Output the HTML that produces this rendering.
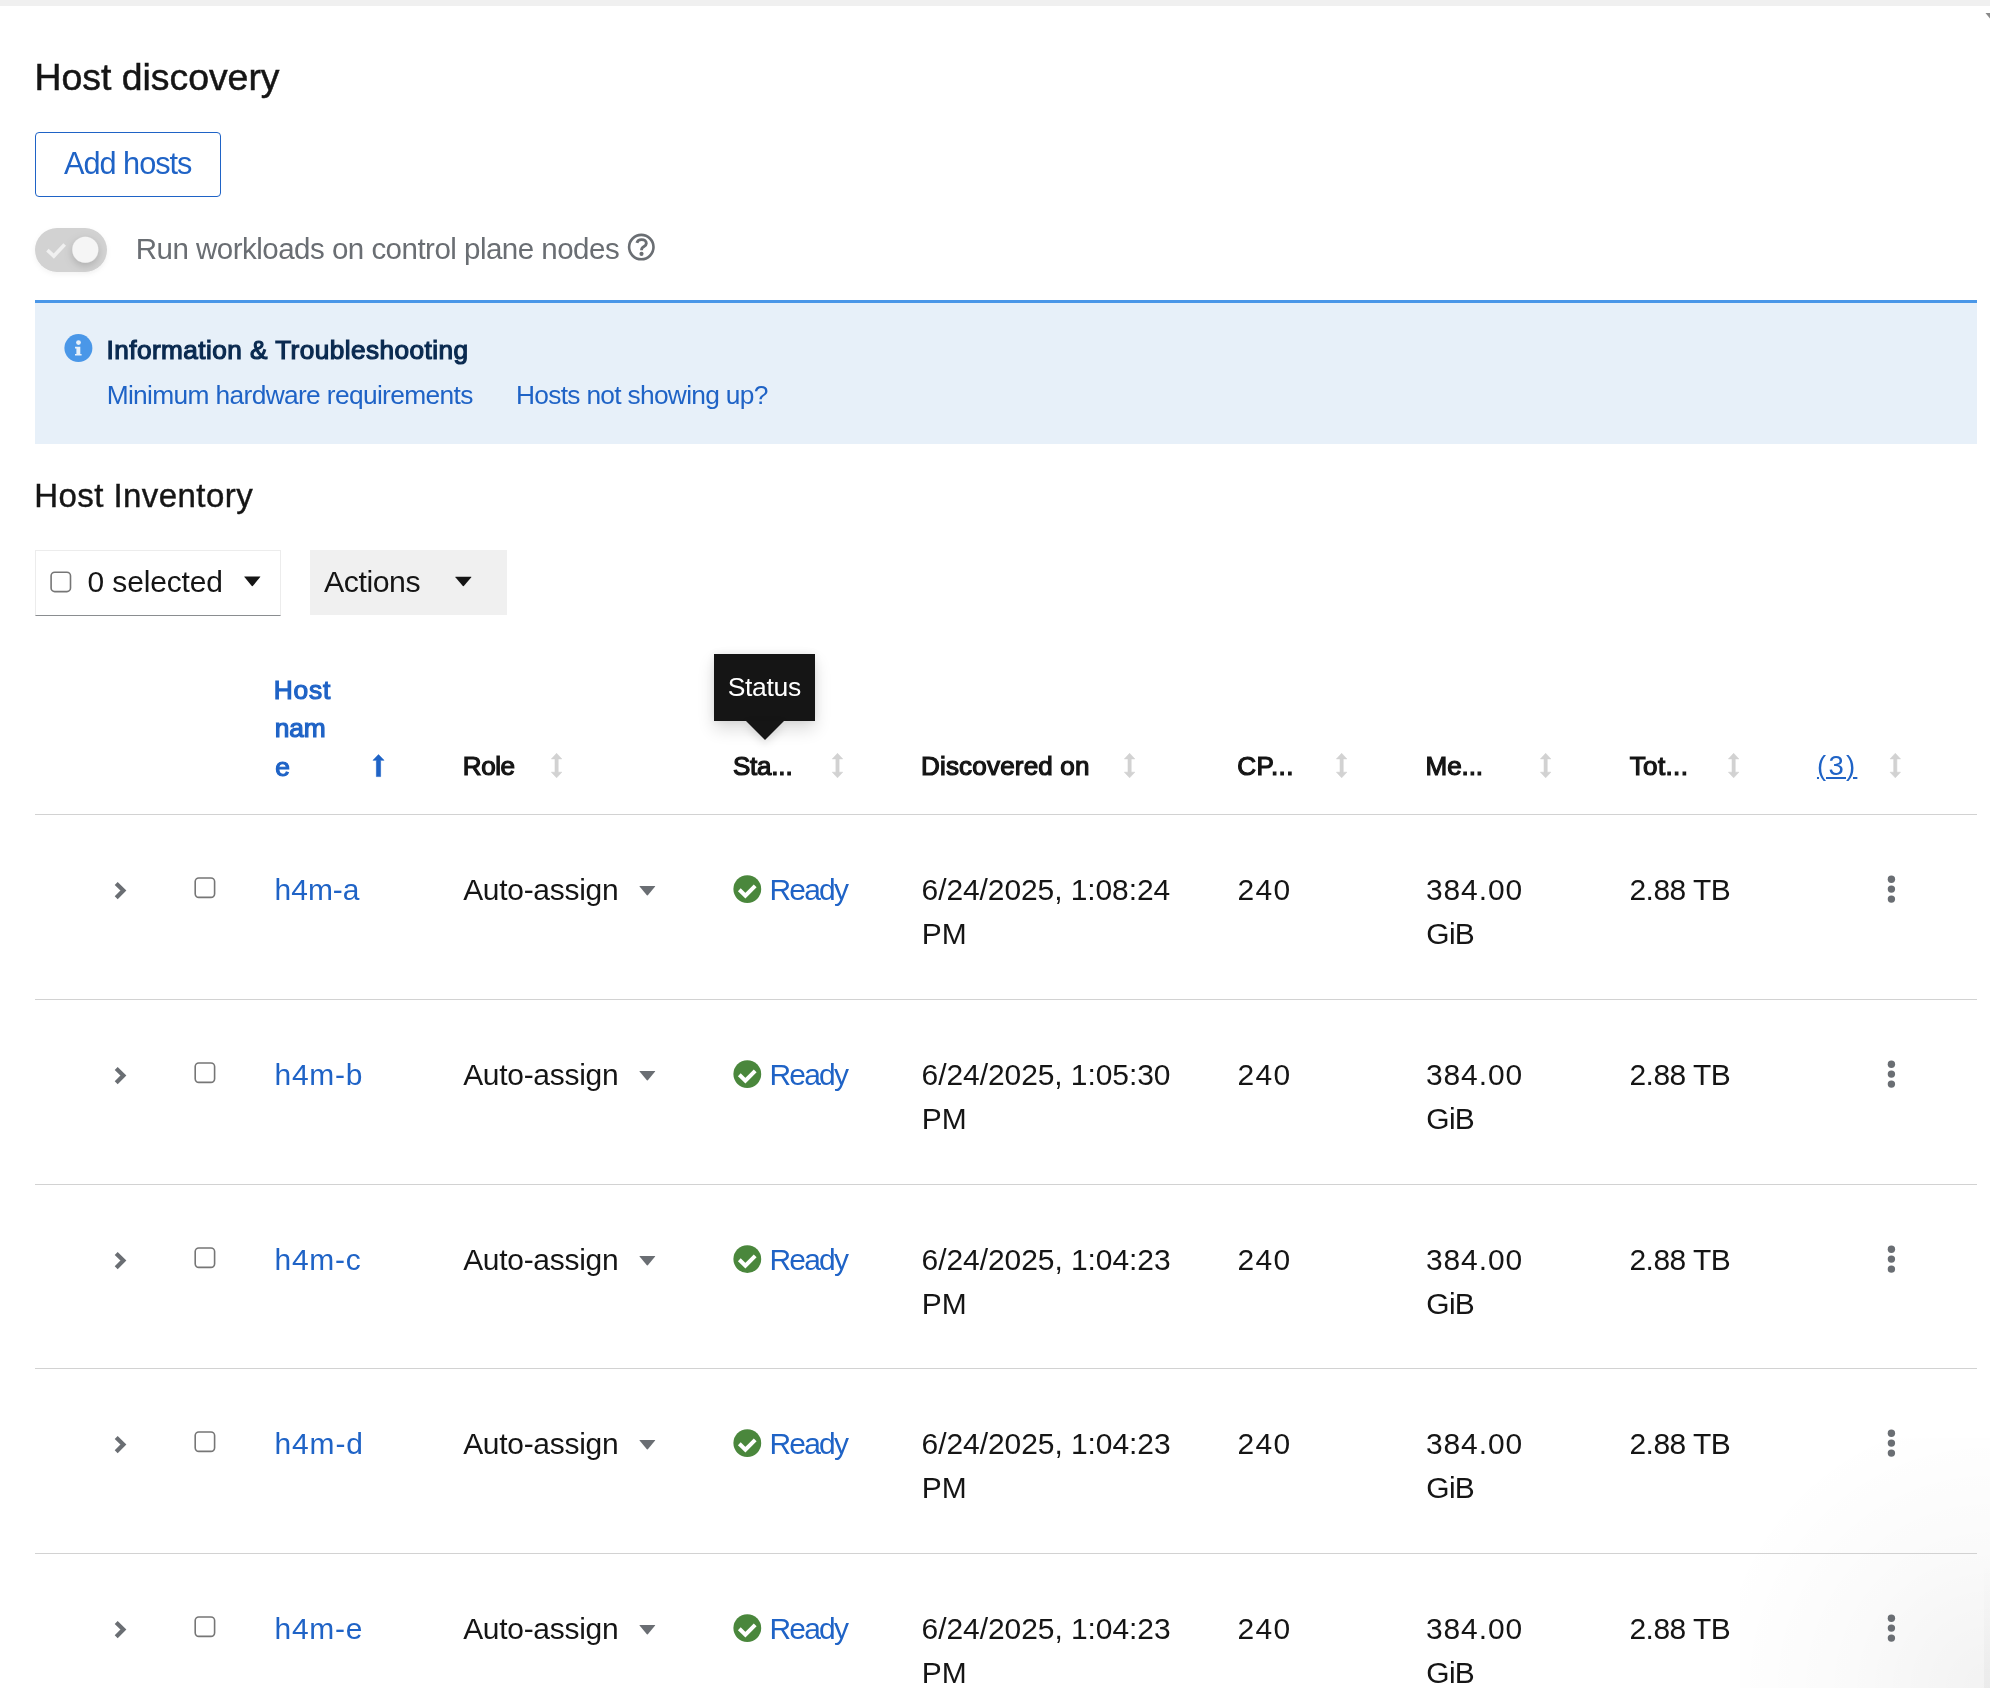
<!DOCTYPE html>
<html><head><meta charset="utf-8"><title>Host discovery</title>
<style>
html,body{margin:0;padding:0;background:#fff;width:1990px;height:1688px;overflow:hidden;position:relative;font-family:"Liberation Sans",sans-serif}
.t{position:absolute;white-space:nowrap;font-family:"Liberation Sans",sans-serif}
#tx{position:absolute;left:0;top:0;width:1990px;height:1688px;will-change:transform}
.a{position:absolute}
</style></head><body>
<div class="a" style="left:0;top:0;width:1990px;height:6px;background:#f0f0f0"></div>
<div class="a" style="left:1740px;top:1438px;width:250px;height:250px;background:radial-gradient(circle at 100% 100%, rgba(0,0,0,0.05) 0%, rgba(0,0,0,0.02) 40%, rgba(0,0,0,0) 80%)"></div>
<div class="a" style="left:1984px;top:1560px;width:6px;height:128px;background:linear-gradient(to bottom, rgba(0,0,0,0), rgba(0,0,0,0.03))"></div>
<div class="a" style="left:35px;top:132px;width:184px;height:63px;border:1px solid #1f63c6;border-radius:4px"></div>
<div class="a" style="left:35px;top:300px;width:1942px;height:144px;background:#e7f0f9"></div>
<div class="a" style="left:35px;top:300px;width:1942px;height:3px;background:#4a97e8"></div>
<div class="a" style="left:35px;top:550px;width:244px;height:64px;border:1px solid #ececec;border-bottom:1px solid #8a8d90"></div>
<div class="a" style="left:310px;top:550px;width:197px;height:65px;background:#f0f0f0"></div>
<div class="a" style="left:35px;top:814px;width:1942px;height:1px;background:#d2d2d2"></div>
<div class="a" style="left:35px;top:999px;width:1942px;height:1px;background:#d2d2d2"></div>
<div class="a" style="left:35px;top:1184px;width:1942px;height:1px;background:#d2d2d2"></div>
<div class="a" style="left:35px;top:1368px;width:1942px;height:1px;background:#d2d2d2"></div>
<div class="a" style="left:35px;top:1553px;width:1942px;height:1px;background:#d2d2d2"></div>
<div class="a" style="left:714px;top:654px;width:101px;height:67px;background:#151515;box-shadow:0 8px 16px rgba(3,3,3,0.14),0 0 8px rgba(3,3,3,0.07)"></div>
<svg class="a" style="left:0;top:0" width="1990" height="1688" viewBox="0 0 1990 1688"><polygon points="1985.5,13 1990,13 1990,18.5" fill="#8a8a8a"/><defs><filter id="ks" x="-50%" y="-50%" width="200%" height="200%"><feDropShadow dx="0" dy="3" stdDeviation="4" flood-color="#000" flood-opacity="0.18"/></filter><filter id="ts" x="-50%" y="-50%" width="200%" height="200%"><feDropShadow dx="0" dy="2" stdDeviation="2.5" flood-color="#000" flood-opacity="0.05"/></filter></defs><rect x="35" y="228" width="72" height="44" rx="22" fill="#d2d2d2" filter="url(#ts)"/><circle cx="85.3" cy="249.8" r="13" fill="#f5f5f5" filter="url(#ks)"/><polyline points="47.4,250.1 53.8,256.1 64.7,244.5" fill="none" stroke="#f0f0f0" stroke-width="3.6"/><circle cx="641.3" cy="247.1" r="12.2" fill="none" stroke="#6a6e73" stroke-width="2.6"/><path d="M636.9,242.9 C637.5,240.6 639.3,239.6 641.6,239.6 C644.5,239.6 646.3,241.3 646.3,243.4 C646.3,245.7 644.1,246.4 642.7,247.4 C641.8,248.1 641.5,248.8 641.5,250.2" fill="none" stroke="#6a6e73" stroke-width="2.9"/><circle cx="641.5" cy="253.8" r="2.1" fill="#6a6e73"/><circle cx="78.4" cy="348.1" r="14" fill="#4a97e8"/><circle cx="78.5" cy="342.6" r="2.4" fill="#e7f0f9"/><path d="M75,346.8 L80.3,346.8 L80.3,354 L81.6,354 L81.6,355.6 L75,355.6 L75,354 L76.4,354 L76.4,348.4 L75,348.4 Z" fill="#e7f0f9"/><path d="M244.6,576.6 L260.0,576.6 Q260.6,576.6 260.20000000000005,577.1 L252.8,586.0 Q252.3,586.3 251.8,586.0 L244.4,577.1 Q244,576.6 244.6,576.6 Z" fill="#151515"/><path d="M455.6,576.7 L471.09999999999997,576.7 Q471.7,576.7 471.3,577.2 L463.85,586.1 Q463.35,586.4 462.85,586.1 L455.4,577.2 Q455,576.7 455.6,576.7 Z" fill="#151515"/><polygon points="745.5,720.5 784.5,720.5 765,740" fill="#151515" style="filter:drop-shadow(0 4px 4px rgba(3,3,3,0.12))"/><path d="M378.5,754.6 L384,760.3 L380.6,760.3 L380.6,776.6 L376.4,776.6 L376.4,760.3 L373,760.3 Z" fill="#1f63c6" stroke="#1f63c6" stroke-width="0.6" stroke-linejoin="round"/><path d="M556.6,753.3 L561.8000000000001,758.9 L558.2,758.9 L558.2,772.2 L561.8000000000001,772.2 L556.6,777.8 L551.4,772.2 L555.0,772.2 L555.0,758.9 L551.4,758.9 Z" fill="#d2d2d2" stroke="#d2d2d2" stroke-width="0.6" stroke-linejoin="round"/><path d="M837.5,753.3 L842.7,758.9 L839.1,758.9 L839.1,772.2 L842.7,772.2 L837.5,777.8 L832.3,772.2 L835.9,772.2 L835.9,758.9 L832.3,758.9 Z" fill="#d2d2d2" stroke="#d2d2d2" stroke-width="0.6" stroke-linejoin="round"/><path d="M1129.6,753.3 L1134.8,758.9 L1131.1999999999998,758.9 L1131.1999999999998,772.2 L1134.8,772.2 L1129.6,777.8 L1124.3999999999999,772.2 L1128.0,772.2 L1128.0,758.9 L1124.3999999999999,758.9 Z" fill="#d2d2d2" stroke="#d2d2d2" stroke-width="0.6" stroke-linejoin="round"/><path d="M1341.65,753.3 L1346.8500000000001,758.9 L1343.25,758.9 L1343.25,772.2 L1346.8500000000001,772.2 L1341.65,777.8 L1336.45,772.2 L1340.0500000000002,772.2 L1340.0500000000002,758.9 L1336.45,758.9 Z" fill="#d2d2d2" stroke="#d2d2d2" stroke-width="0.6" stroke-linejoin="round"/><path d="M1545.65,753.3 L1550.8500000000001,758.9 L1547.25,758.9 L1547.25,772.2 L1550.8500000000001,772.2 L1545.65,777.8 L1540.45,772.2 L1544.0500000000002,772.2 L1544.0500000000002,758.9 L1540.45,758.9 Z" fill="#d2d2d2" stroke="#d2d2d2" stroke-width="0.6" stroke-linejoin="round"/><path d="M1733.65,753.3 L1738.8500000000001,758.9 L1735.25,758.9 L1735.25,772.2 L1738.8500000000001,772.2 L1733.65,777.8 L1728.45,772.2 L1732.0500000000002,772.2 L1732.0500000000002,758.9 L1728.45,758.9 Z" fill="#d2d2d2" stroke="#d2d2d2" stroke-width="0.6" stroke-linejoin="round"/><path d="M1895.3,753.3 L1900.5,758.9 L1896.8999999999999,758.9 L1896.8999999999999,772.2 L1900.5,772.2 L1895.3,777.8 L1890.1,772.2 L1893.7,772.2 L1893.7,758.9 L1890.1,758.9 Z" fill="#d2d2d2" stroke="#d2d2d2" stroke-width="0.6" stroke-linejoin="round"/><rect x="51.1" y="572.2" width="19.4" height="19.4" rx="3.6" fill="#fff" stroke="#767676" stroke-width="1.6"/><rect x="195.2" y="878.0" width="19.4" height="19.4" rx="3.6" fill="#fff" stroke="#767676" stroke-width="1.6"/><polyline points="116.2,883.4 123.4,890.6 116.2,897.8" fill="none" stroke="#6a6e73" stroke-width="4.2" stroke-linejoin="miter"/><path d="M639.8000000000001,885.9 L654.9,885.9 Q655.5,885.9 655.1,886.4 L647.85,895.3000000000001 Q647.35,895.6 646.85,895.3000000000001 L639.6,886.4 Q639.2,885.9 639.8000000000001,885.9 Z" fill="#6a6e73"/><circle cx="747.3" cy="889.1" r="13.9" fill="#4a873c"/><polyline points="739.3,889.8 745.4,895.7 755.2,885.9" fill="none" stroke="#fff" stroke-width="4"/><circle cx="1891.4" cy="879.3" r="3.7" fill="#6a6e73"/><circle cx="1891.4" cy="889.1" r="3.7" fill="#6a6e73"/><circle cx="1891.4" cy="899.1" r="3.7" fill="#6a6e73"/><rect x="195.2" y="1063.0" width="19.4" height="19.4" rx="3.6" fill="#fff" stroke="#767676" stroke-width="1.6"/><polyline points="116.2,1068.4 123.4,1075.6 116.2,1082.8" fill="none" stroke="#6a6e73" stroke-width="4.2" stroke-linejoin="miter"/><path d="M639.8000000000001,1070.9 L654.9,1070.9 Q655.5,1070.9 655.1,1071.4 L647.85,1080.3 Q647.35,1080.6 646.85,1080.3 L639.6,1071.4 Q639.2,1070.9 639.8000000000001,1070.9 Z" fill="#6a6e73"/><circle cx="747.3" cy="1074.1" r="13.9" fill="#4a873c"/><polyline points="739.3,1074.8 745.4,1080.7 755.2,1070.9" fill="none" stroke="#fff" stroke-width="4"/><circle cx="1891.4" cy="1064.3" r="3.7" fill="#6a6e73"/><circle cx="1891.4" cy="1074.1" r="3.7" fill="#6a6e73"/><circle cx="1891.4" cy="1084.1" r="3.7" fill="#6a6e73"/><rect x="195.2" y="1248.0" width="19.4" height="19.4" rx="3.6" fill="#fff" stroke="#767676" stroke-width="1.6"/><polyline points="116.2,1253.4 123.4,1260.6 116.2,1267.8" fill="none" stroke="#6a6e73" stroke-width="4.2" stroke-linejoin="miter"/><path d="M639.8000000000001,1255.9 L654.9,1255.9 Q655.5,1255.9 655.1,1256.4 L647.85,1265.3 Q647.35,1265.6 646.85,1265.3 L639.6,1256.4 Q639.2,1255.9 639.8000000000001,1255.9 Z" fill="#6a6e73"/><circle cx="747.3" cy="1259.1" r="13.9" fill="#4a873c"/><polyline points="739.3,1259.8 745.4,1265.7 755.2,1255.9" fill="none" stroke="#fff" stroke-width="4"/><circle cx="1891.4" cy="1249.3" r="3.7" fill="#6a6e73"/><circle cx="1891.4" cy="1259.1" r="3.7" fill="#6a6e73"/><circle cx="1891.4" cy="1269.1" r="3.7" fill="#6a6e73"/><rect x="195.2" y="1432.0" width="19.4" height="19.4" rx="3.6" fill="#fff" stroke="#767676" stroke-width="1.6"/><polyline points="116.2,1437.4 123.4,1444.6 116.2,1451.8" fill="none" stroke="#6a6e73" stroke-width="4.2" stroke-linejoin="miter"/><path d="M639.8000000000001,1439.9 L654.9,1439.9 Q655.5,1439.9 655.1,1440.4 L647.85,1449.3 Q647.35,1449.6 646.85,1449.3 L639.6,1440.4 Q639.2,1439.9 639.8000000000001,1439.9 Z" fill="#6a6e73"/><circle cx="747.3" cy="1443.1" r="13.9" fill="#4a873c"/><polyline points="739.3,1443.8 745.4,1449.7 755.2,1439.9" fill="none" stroke="#fff" stroke-width="4"/><circle cx="1891.4" cy="1433.3" r="3.7" fill="#6a6e73"/><circle cx="1891.4" cy="1443.1" r="3.7" fill="#6a6e73"/><circle cx="1891.4" cy="1453.1" r="3.7" fill="#6a6e73"/><rect x="195.2" y="1617.0" width="19.4" height="19.4" rx="3.6" fill="#fff" stroke="#767676" stroke-width="1.6"/><polyline points="116.2,1622.4 123.4,1629.6 116.2,1636.8" fill="none" stroke="#6a6e73" stroke-width="4.2" stroke-linejoin="miter"/><path d="M639.8000000000001,1624.9 L654.9,1624.9 Q655.5,1624.9 655.1,1625.4 L647.85,1634.3 Q647.35,1634.6 646.85,1634.3 L639.6,1625.4 Q639.2,1624.9 639.8000000000001,1624.9 Z" fill="#6a6e73"/><circle cx="747.3" cy="1628.1" r="13.9" fill="#4a873c"/><polyline points="739.3,1628.8 745.4,1634.7 755.2,1624.9" fill="none" stroke="#fff" stroke-width="4"/><circle cx="1891.4" cy="1618.3" r="3.7" fill="#6a6e73"/><circle cx="1891.4" cy="1628.1" r="3.7" fill="#6a6e73"/><circle cx="1891.4" cy="1638.1" r="3.7" fill="#6a6e73"/></svg>
<div id="tx">
<span class="t" style="left:34.42px;top:59.00px;font-size:37.38px;line-height:37.38px;letter-spacing:0.004px;color:#151515;-webkit-text-stroke:0.5px #151515;">Host discovery</span>
<span class="t" style="left:64.12px;top:149.20px;font-size:30.69px;line-height:30.69px;letter-spacing:-1.031px;color:#1f63c6;">Add hosts</span>
<span class="t" style="left:135.76px;top:233.80px;font-size:29.53px;line-height:29.53px;letter-spacing:-0.519px;color:#6a6e73;">Run workloads on control plane nodes</span>
<span class="t" style="left:106.48px;top:337.05px;font-size:26.18px;line-height:26.18px;letter-spacing:0.446px;color:#0a2a50;-webkit-text-stroke:1.2px #0a2a50;">Information &amp; Troubleshooting</span>
<span class="t" style="left:106.63px;top:382.10px;font-size:26.33px;line-height:26.33px;letter-spacing:-0.648px;color:#1f63c6;">Minimum hardware requirements</span>
<span class="t" style="left:516.03px;top:382.10px;font-size:26.33px;line-height:26.33px;letter-spacing:-0.704px;color:#1f63c6;">Hosts not showing up?</span>
<span class="t" style="left:34.28px;top:478.80px;font-size:33.02px;line-height:33.02px;letter-spacing:0.425px;color:#151515;-webkit-text-stroke:0.4px #151515;">Host Inventory</span>
<span class="t" style="left:87.60px;top:566.90px;font-size:29.96px;line-height:29.96px;letter-spacing:-0.132px;color:#151515;">0 selected</span>
<span class="t" style="left:324.02px;top:567.00px;font-size:30.25px;line-height:30.25px;letter-spacing:-0.433px;color:#151515;">Actions</span>
<span class="t" style="left:273.83px;top:677.10px;font-size:26.33px;line-height:26.33px;letter-spacing:0.756px;color:#1f63c6;-webkit-text-stroke:1.2px #1f63c6;">Host</span>
<span class="t" style="left:274.72px;top:715.20px;font-size:26.33px;line-height:26.33px;letter-spacing:-0.109px;color:#1f63c6;-webkit-text-stroke:1.2px #1f63c6;">nam</span>
<span class="t" style="left:275.18px;top:753.50px;font-size:26.33px;line-height:26.33px;letter-spacing:0.000px;color:#1f63c6;-webkit-text-stroke:1.2px #1f63c6;">e</span>
<span class="t" style="left:462.85px;top:753.20px;font-size:26.04px;line-height:26.04px;letter-spacing:-0.483px;color:#151515;-webkit-text-stroke:1.2px #151515;">Role</span>
<span class="t" style="left:732.93px;top:753.20px;font-size:26.04px;line-height:26.04px;letter-spacing:-0.216px;color:#151515;-webkit-text-stroke:1.2px #151515;">Sta...</span>
<span class="t" style="left:920.95px;top:753.20px;font-size:26.04px;line-height:26.04px;letter-spacing:0.181px;color:#151515;-webkit-text-stroke:1.2px #151515;">Discovered on</span>
<span class="t" style="left:1237.30px;top:753.20px;font-size:26.04px;line-height:26.04px;letter-spacing:0.391px;color:#151515;-webkit-text-stroke:1.2px #151515;">CP...</span>
<span class="t" style="left:1425.55px;top:753.20px;font-size:26.04px;line-height:26.04px;letter-spacing:-0.094px;color:#151515;-webkit-text-stroke:1.2px #151515;">Me...</span>
<span class="t" style="left:1629.71px;top:753.20px;font-size:26.04px;line-height:26.04px;letter-spacing:0.359px;color:#151515;-webkit-text-stroke:1.2px #151515;">Tot...</span>
<span class="t" style="left:1816.98px;top:752.20px;font-size:27.5px;line-height:27.5px;letter-spacing:2.259px;color:#1f63c6;text-decoration:underline;text-underline-offset:2px;text-decoration-thickness:1.5px;">(3)</span>
<span class="t" style="left:727.71px;top:674.00px;font-size:26.47px;line-height:26.47px;letter-spacing:-0.306px;color:#ffffff;">Status</span>
<span class="t" style="left:274.50px;top:875.00px;font-size:29.96px;line-height:29.96px;letter-spacing:0.031px;color:#1f63c6;">h4m-a</span>
<span class="t" style="left:463.13px;top:874.80px;font-size:29.96px;line-height:29.96px;letter-spacing:-0.269px;color:#151515;">Auto-assign</span>
<span class="t" style="left:769.53px;top:874.80px;font-size:29.96px;line-height:29.96px;letter-spacing:-1.787px;color:#1f63c6;">Ready</span>
<span class="t" style="left:921.60px;top:875.00px;font-size:29.96px;line-height:29.96px;letter-spacing:-0.075px;color:#151515;">6/24/2025, 1:08:24</span>
<span class="t" style="left:921.73px;top:918.70px;font-size:29.96px;line-height:29.96px;letter-spacing:0.000px;color:#151515;">PM</span>
<span class="t" style="left:1237.50px;top:875.00px;font-size:29.96px;line-height:29.96px;letter-spacing:1.279px;color:#151515;">240</span>
<span class="t" style="left:1425.88px;top:875.00px;font-size:29.96px;line-height:29.96px;letter-spacing:0.927px;color:#151515;">384.00</span>
<span class="t" style="left:1426.30px;top:918.70px;font-size:29.96px;line-height:29.96px;letter-spacing:-0.697px;color:#151515;">GiB</span>
<span class="t" style="left:1629.40px;top:875.00px;font-size:29.96px;line-height:29.96px;letter-spacing:-0.492px;color:#151515;">2.88 TB</span>
<span class="t" style="left:274.50px;top:1060.00px;font-size:29.96px;line-height:29.96px;letter-spacing:0.756px;color:#1f63c6;">h4m-b</span>
<span class="t" style="left:463.13px;top:1059.80px;font-size:29.96px;line-height:29.96px;letter-spacing:-0.269px;color:#151515;">Auto-assign</span>
<span class="t" style="left:769.53px;top:1059.80px;font-size:29.96px;line-height:29.96px;letter-spacing:-1.787px;color:#1f63c6;">Ready</span>
<span class="t" style="left:921.60px;top:1060.00px;font-size:29.96px;line-height:29.96px;letter-spacing:-0.057px;color:#151515;">6/24/2025, 1:05:30</span>
<span class="t" style="left:921.73px;top:1103.70px;font-size:29.96px;line-height:29.96px;letter-spacing:0.000px;color:#151515;">PM</span>
<span class="t" style="left:1237.50px;top:1060.00px;font-size:29.96px;line-height:29.96px;letter-spacing:1.279px;color:#151515;">240</span>
<span class="t" style="left:1425.88px;top:1060.00px;font-size:29.96px;line-height:29.96px;letter-spacing:0.927px;color:#151515;">384.00</span>
<span class="t" style="left:1426.30px;top:1103.70px;font-size:29.96px;line-height:29.96px;letter-spacing:-0.697px;color:#151515;">GiB</span>
<span class="t" style="left:1629.40px;top:1060.00px;font-size:29.96px;line-height:29.96px;letter-spacing:-0.492px;color:#151515;">2.88 TB</span>
<span class="t" style="left:274.50px;top:1245.00px;font-size:29.96px;line-height:29.96px;letter-spacing:0.749px;color:#1f63c6;">h4m-c</span>
<span class="t" style="left:463.13px;top:1244.80px;font-size:29.96px;line-height:29.96px;letter-spacing:-0.269px;color:#151515;">Auto-assign</span>
<span class="t" style="left:769.53px;top:1244.80px;font-size:29.96px;line-height:29.96px;letter-spacing:-1.787px;color:#1f63c6;">Ready</span>
<span class="t" style="left:921.60px;top:1245.00px;font-size:29.96px;line-height:29.96px;letter-spacing:-0.049px;color:#151515;">6/24/2025, 1:04:23</span>
<span class="t" style="left:921.73px;top:1288.70px;font-size:29.96px;line-height:29.96px;letter-spacing:0.000px;color:#151515;">PM</span>
<span class="t" style="left:1237.50px;top:1245.00px;font-size:29.96px;line-height:29.96px;letter-spacing:1.279px;color:#151515;">240</span>
<span class="t" style="left:1425.88px;top:1245.00px;font-size:29.96px;line-height:29.96px;letter-spacing:0.927px;color:#151515;">384.00</span>
<span class="t" style="left:1426.30px;top:1288.70px;font-size:29.96px;line-height:29.96px;letter-spacing:-0.697px;color:#151515;">GiB</span>
<span class="t" style="left:1629.40px;top:1245.00px;font-size:29.96px;line-height:29.96px;letter-spacing:-0.492px;color:#151515;">2.88 TB</span>
<span class="t" style="left:274.50px;top:1429.00px;font-size:29.96px;line-height:29.96px;letter-spacing:0.875px;color:#1f63c6;">h4m-d</span>
<span class="t" style="left:463.13px;top:1428.80px;font-size:29.96px;line-height:29.96px;letter-spacing:-0.269px;color:#151515;">Auto-assign</span>
<span class="t" style="left:769.53px;top:1428.80px;font-size:29.96px;line-height:29.96px;letter-spacing:-1.787px;color:#1f63c6;">Ready</span>
<span class="t" style="left:921.60px;top:1429.00px;font-size:29.96px;line-height:29.96px;letter-spacing:-0.049px;color:#151515;">6/24/2025, 1:04:23</span>
<span class="t" style="left:921.73px;top:1472.70px;font-size:29.96px;line-height:29.96px;letter-spacing:0.000px;color:#151515;">PM</span>
<span class="t" style="left:1237.50px;top:1429.00px;font-size:29.96px;line-height:29.96px;letter-spacing:1.279px;color:#151515;">240</span>
<span class="t" style="left:1425.88px;top:1429.00px;font-size:29.96px;line-height:29.96px;letter-spacing:0.927px;color:#151515;">384.00</span>
<span class="t" style="left:1426.30px;top:1472.70px;font-size:29.96px;line-height:29.96px;letter-spacing:-0.697px;color:#151515;">GiB</span>
<span class="t" style="left:1629.40px;top:1429.00px;font-size:29.96px;line-height:29.96px;letter-spacing:-0.492px;color:#151515;">2.88 TB</span>
<span class="t" style="left:274.50px;top:1614.00px;font-size:29.96px;line-height:29.96px;letter-spacing:0.725px;color:#1f63c6;">h4m-e</span>
<span class="t" style="left:463.13px;top:1613.80px;font-size:29.96px;line-height:29.96px;letter-spacing:-0.269px;color:#151515;">Auto-assign</span>
<span class="t" style="left:769.53px;top:1613.80px;font-size:29.96px;line-height:29.96px;letter-spacing:-1.787px;color:#1f63c6;">Ready</span>
<span class="t" style="left:921.60px;top:1614.00px;font-size:29.96px;line-height:29.96px;letter-spacing:-0.049px;color:#151515;">6/24/2025, 1:04:23</span>
<span class="t" style="left:921.73px;top:1657.70px;font-size:29.96px;line-height:29.96px;letter-spacing:0.000px;color:#151515;">PM</span>
<span class="t" style="left:1237.50px;top:1614.00px;font-size:29.96px;line-height:29.96px;letter-spacing:1.279px;color:#151515;">240</span>
<span class="t" style="left:1425.88px;top:1614.00px;font-size:29.96px;line-height:29.96px;letter-spacing:0.927px;color:#151515;">384.00</span>
<span class="t" style="left:1426.30px;top:1657.70px;font-size:29.96px;line-height:29.96px;letter-spacing:-0.697px;color:#151515;">GiB</span>
<span class="t" style="left:1629.40px;top:1614.00px;font-size:29.96px;line-height:29.96px;letter-spacing:-0.492px;color:#151515;">2.88 TB</span>
</div>
</body></html>
